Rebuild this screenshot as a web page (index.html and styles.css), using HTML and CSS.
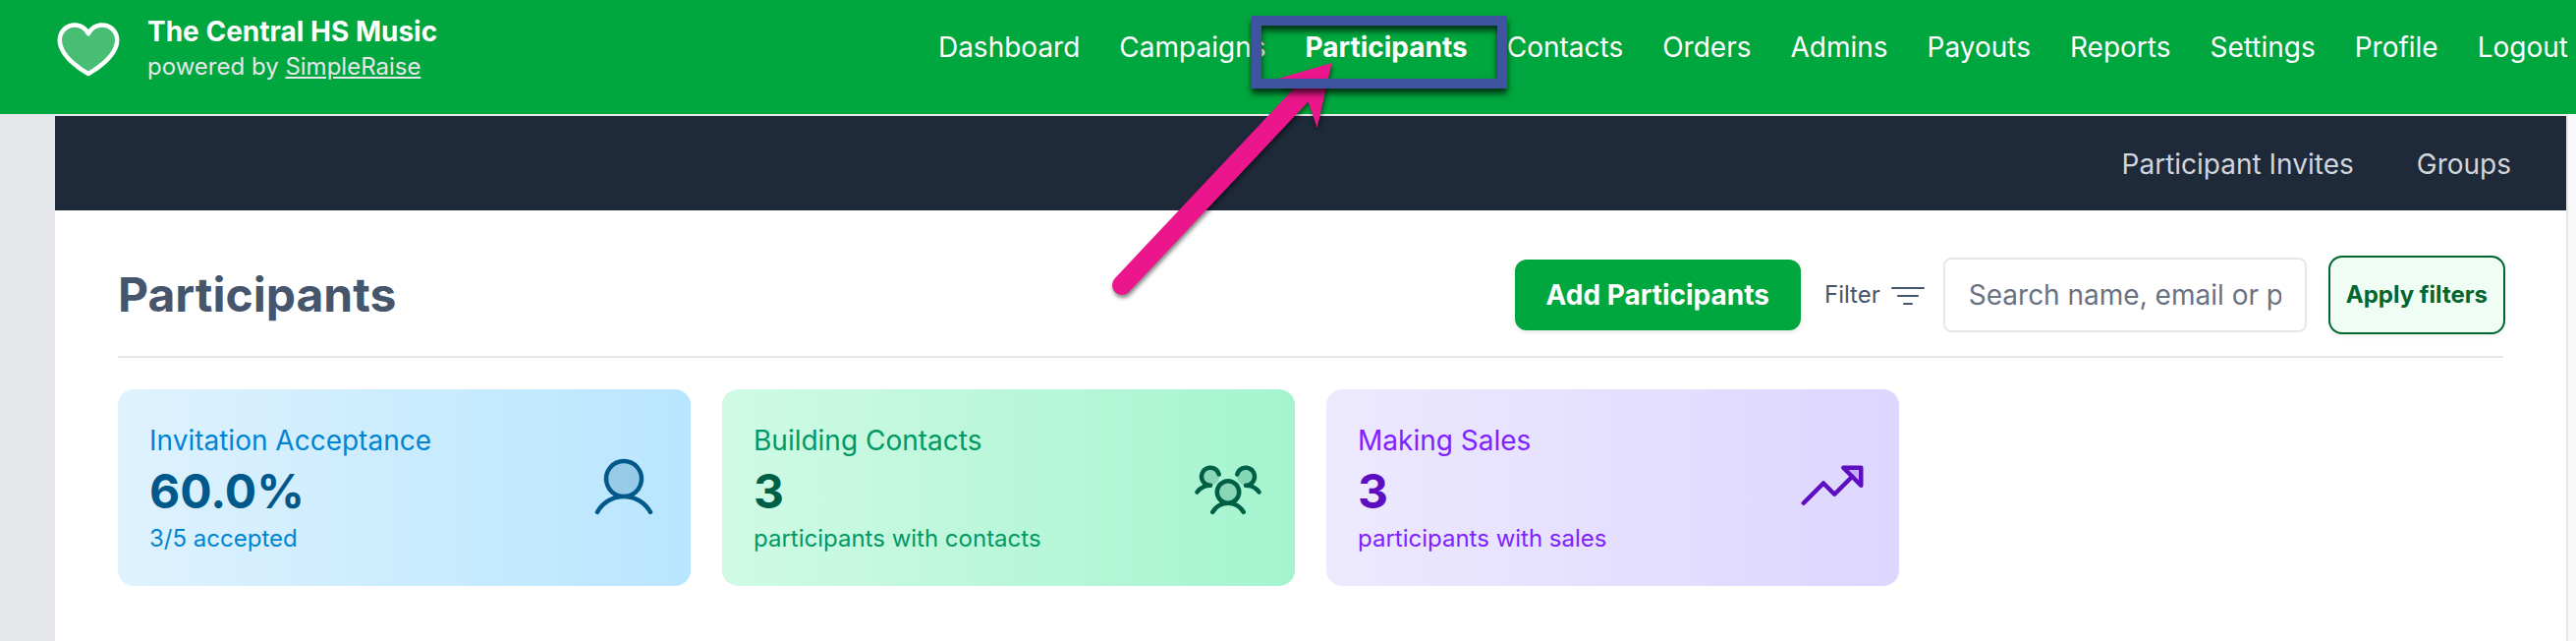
FILE: index.html
```
<!DOCTYPE html>
<html lang="en">
<head>
  <meta charset="UTF-8">
  <meta name="viewport" content="width=device-width, initial-scale=1">
  <title>Participants</title>
  <link rel="stylesheet" href="styles.css">
</head>
<body>

  <header class="header">
    <div class="brand">
      <svg class="icon" viewBox="0 0 256 256" fill="currentColor" aria-hidden="true">
        <path opacity="0.28" d="M232,102c0,66-104,122-104,122S24,168,24,102A54,54,0,0,1,78,48c22.59,0,41.94,12.31,50,32,8.06-19.69,27.41-32,50-32A54,54,0,0,1,232,102Z"/>
        <path d="M178,40c-20.65,0-38.73,8.88-50,23.89C116.73,48.88,98.65,40,78,40a62.07,62.07,0,0,0-62,62c0,70,103.79,126.66,108.21,129a8,8,0,0,0,7.58,0C136.21,228.66,240,172,240,102A62.07,62.07,0,0,0,178,40ZM128,214.8C109.74,204.16,32,155.69,32,102A46.06,46.06,0,0,1,78,56c19.45,0,35.78,10.36,42.6,27a8,8,0,0,0,14.8,0c6.82-16.67,23.15-27,42.6-27a46.06,46.06,0,0,1,46,46C224,155.61,146.24,204.15,128,214.8Z"/>
      </svg>
      <div>
        <div class="brand-name">The Central HS Music</div>
        <div class="brand-sub">powered by <a href="#">SimpleRaise</a></div>
      </div>
    </div>

    <nav class="nav">
      <a href="#">Dashboard</a>
      <a href="#">Campaigns</a>
      <div class="nav-current">
        <a href="#" class="active">Participants</a>
        <svg class="arrow" viewBox="0 0 250 260" aria-hidden="true">
          <path d="M22 240 L204 47" stroke="#ec168c" stroke-width="20" stroke-linecap="round"/>
          <path d="M235.600 14 L220.700 80 L211.600 54 L197 40 L170.600 33 Z" fill="#ec168c"/>
        </svg>
        <span class="callout"></span>
      </div>
      <a href="#">Contacts</a>
      <a href="#">Orders</a>
      <a href="#">Admins</a>
      <a href="#">Payouts</a>
      <a href="#">Reports</a>
      <a href="#">Settings</a>
      <a href="#">Profile</a>
      <a href="#">Logout</a>
    </nav>
  </header>

  <div class="layout">
    <aside class="side"></aside>

    <main class="panel">
      <nav class="subnav">
        <a href="#">Participant Invites</a>
        <a href="#">Groups</a>
      </nav>

      <div class="content">
        <div class="toolbar">
          <h1>Participants</h1>
          <button type="button" class="btn-add">Add Participants</button>
          <form class="filters">
            <label class="filter-label" for="search">
              Filter
              <svg class="filter-icon" viewBox="0 0 40 20" fill="none" stroke="currentColor" stroke-width="2" stroke-linecap="round" aria-hidden="true">
                <path d="M4 3h32M10 11h20M16 19h8"/>
              </svg>
            </label>
            <input type="text" id="search" class="search" placeholder="Search name, email or phone">
            <button type="button" class="btn-apply">Apply filters</button>
          </form>
        </div>

        <div class="cards">
          <div class="card blue">
            <div>
              <div class="card-label">Invitation Acceptance</div>
              <div class="card-value">60.0%</div>
              <div class="card-note">3/5 accepted</div>
            </div>
            <svg class="icon" viewBox="0 0 256 256" fill="currentColor" aria-hidden="true">
              <circle opacity="0.2" cx="128" cy="96" r="64"/>
              <path d="M230.920,212c-15.230-26.330-38.700-45.210-66.090-54.160a72,72,0,1,0-73.660,0C63.780,166.780,40.310,185.660,25.080,212a8,8,0,1,0,13.850,8c18.840-32.560,52.140-52,89.070-52s70.230,19.440,89.070,52a8,8,0,1,0,13.850-8ZM72,96a56,56,0,1,1,56,56A56.060,56.060,0,0,1,72,96Z"/>
            </svg>
          </div>

          <div class="card green">
            <div>
              <div class="card-label">Building Contacts</div>
              <div class="card-value">3</div>
              <div class="card-note">participants with contacts</div>
            </div>
            <svg class="icon" viewBox="0 0 256 256" fill="currentColor" aria-hidden="true">
              <path opacity="0.2" d="M168,144a40,40,0,1,1-40-40A40,40,0,0,1,168,144ZM64,56A32,32,0,0,0,64,120C76,120,85,113,90,105 93,100 96,95 96,88A32,32,0,0,0,64,56Zm128,0a32,32,0,0,0-32,32C160,95,163,100,166,105 171,113,180,120,192,120a32,32,0,0,0,0-64Z"/>
              <path d="M244.800,150.400a8,8,0,0,1-11.200-1.600A51.600,51.600,0,0,0,192,128a8,8,0,0,1,0-16,24,24,0,1,0-23.240-30,8,8,0,1,1-15.500-4A40,40,0,1,1,219,117.510a67.940,67.940,0,0,1,27.430,21.680A8,8,0,0,1,244.800,150.400ZM190.920,212a8,8,0,1,1-13.850,8,57,57,0,0,0-98.150,0,8,8,0,1,1-13.840-8,72.060,72.060,0,0,1,33.740-29.920,48,48,0,1,1,58.360,0A72.060,72.060,0,0,1,190.920,212ZM128,176a32,32,0,1,0-32-32A32,32,0,0,0,128,176ZM72,120a8,8,0,0,0-8-8A24,24,0,1,1,87.240,82a8,8,0,1,0,15.500-4A40,40,0,1,0,37,117.510,67.940,67.940,0,0,0,9.600,139.190a8,8,0,1,0,12.800,9.610A51.600,51.600,0,0,1,64,128,8,8,0,0,0,72,120Z"/>
            </svg>
          </div>

          <div class="card purple">
            <div>
              <div class="card-label">Making Sales</div>
              <div class="card-value">3</div>
              <div class="card-note">participants with sales</div>
            </div>
            <svg class="icon" viewBox="0 0 256 256" fill="none" stroke="currentColor" stroke-width="16" stroke-linecap="round" stroke-linejoin="round" aria-hidden="true">
              <path opacity="0.2" fill="currentColor" stroke="none" d="M232 56v64L168 56Z"/>
              <path d="M232 56v64L168 56Z"/>
              <path d="M200 88l-64 64-40-40-72 72"/>
            </svg>
          </div>
        </div>
      </div>
    </main>
  </div>

</body>
</html>
```
FILE: styles.css
```
* {
  box-sizing: border-box;
}

body {
  margin: 0;
  min-height: 100vh;
  display: flex;
  flex-direction: column;
  background: #f8f9fb;
  font-family: Inter, "Liberation Sans", sans-serif;
  font-size: 28px;
  line-height: 40px;
}

a {
  color: inherit;
  text-decoration: none;
}

button,
input {
  font: inherit;
}

.icon {
  width: 72px;
  height: 72px;
  flex-shrink: 0;
}

/* header */
.header {
  display: flex;
  justify-content: space-between;
  align-items: center;
  padding: 12px 8px 32px 54px;
  background: #00a63e;
  color: #fff;
}

.brand {
  display: flex;
  align-items: center;
  gap: 24px;
}

.brand-name {
  font-weight: 700;
}

.brand-sub {
  font-size: 24px;
  line-height: 32px;
  color: #e5e7eb;
}

.brand-sub a {
  text-decoration: underline;
}

.nav {
  display: flex;
  gap: 40px;
}

.nav .active {
  font-weight: 700;
}

/* highlight on the current item */
.nav-current {
  position: relative;
}

.callout {
  position: absolute;
  left: -54px;
  top: -12px;
  width: 260px;
  height: 74px;
  border: 10px solid #4053a0;
  filter: drop-shadow(0 5px 3px rgba(0, 0, 0, 0.7));
  pointer-events: none;
}

.arrow {
  position: absolute;
  left: -208px;
  top: 22px;
  width: 250px;
  height: 260px;
  filter: drop-shadow(1px 3px 2px rgba(0, 0, 0, 0.5));
  pointer-events: none;
}

/* page */
.layout {
  flex: 1;
  display: flex;
  padding-right: 8px;
}

.side {
  width: 56px;
  background: #e5e7eb;
}

.panel {
  flex: 1;
  background: #fff;
  border-top: 2px solid #e5e7eb;
  border-right: 2px solid #e5e7eb;
}

.subnav {
  display: flex;
  justify-content: flex-end;
  gap: 64px;
  padding: 29px 56px 27px;
  background: #1e2939;
  color: #d1d5dc;
}

.content {
  padding: 48px 64px;
}

.toolbar {
  display: flex;
  align-items: center;
  gap: 24px;
  padding-bottom: 24px;
  margin-bottom: 32px;
  border-bottom: 2px solid #e5e7eb;
}

.toolbar h1 {
  flex: 1;
  margin: 0;
  font-size: 48px;
  line-height: 64px;
  font-weight: 700;
  color: #45556c;
}

.filters {
  display: flex;
  align-items: center;
}

.btn-add {
  padding: 16px 32px;
  border: none;
  border-radius: 12px;
  background: #00a63e;
  color: #fff;
  font-weight: 700;
  box-shadow: 0 2px 4px rgba(0, 0, 0, 0.1);
  cursor: pointer;
}

.filter-label {
  display: flex;
  align-items: center;
  gap: 8px;
  margin-right: 16px;
  font-size: 24px;
  line-height: 32px;
  color: #45556c;
}

.filter-icon {
  width: 40px;
  height: 20px;
}

.search {
  width: 370px;
  height: 76px;
  margin-right: 24px;
  padding: 0 24px;
  border: 2px solid #e5e7eb;
  border-radius: 8px;
  background: #fff;
}

.search::placeholder {
  color: #6a7282;
}

.btn-apply {
  height: 76px;
  padding: 0 16px;
  border: none;
  border-radius: 12px;
  background: #f0fdf4;
  color: #016630;
  font-size: 24px;
  font-weight: 700;
  box-shadow: 0 0 0 2px #016630, 0 2px 6px rgba(0, 0, 0, 0.1);
  cursor: pointer;
}

/* stat cards */
.cards {
  display: grid;
  grid-template-columns: repeat(4, 1fr);
  gap: 32px;
}

.card {
  display: flex;
  justify-content: space-between;
  align-items: center;
  padding: 32px;
  border-radius: 16px;
}

.card-value {
  font-size: 48px;
  line-height: 64px;
  font-weight: 700;
}

.card-note {
  font-size: 24px;
  line-height: 32px;
}

.blue {
  background: linear-gradient(to right, #dff2fe, #b8e6fe);
  color: #0084d1;
}

.blue .card-value,
.blue .icon {
  color: #00598a;
}

.green {
  background: linear-gradient(to right, #d0fae5, #a4f4cf);
  color: #009966;
}

.green .card-value,
.green .icon {
  color: #006045;
}

.purple {
  background: linear-gradient(to right, #ede9fe, #ddd6ff);
  color: #7f22fe;
}

.purple .card-value,
.purple .icon {
  color: #5d0ec0;
}
```
